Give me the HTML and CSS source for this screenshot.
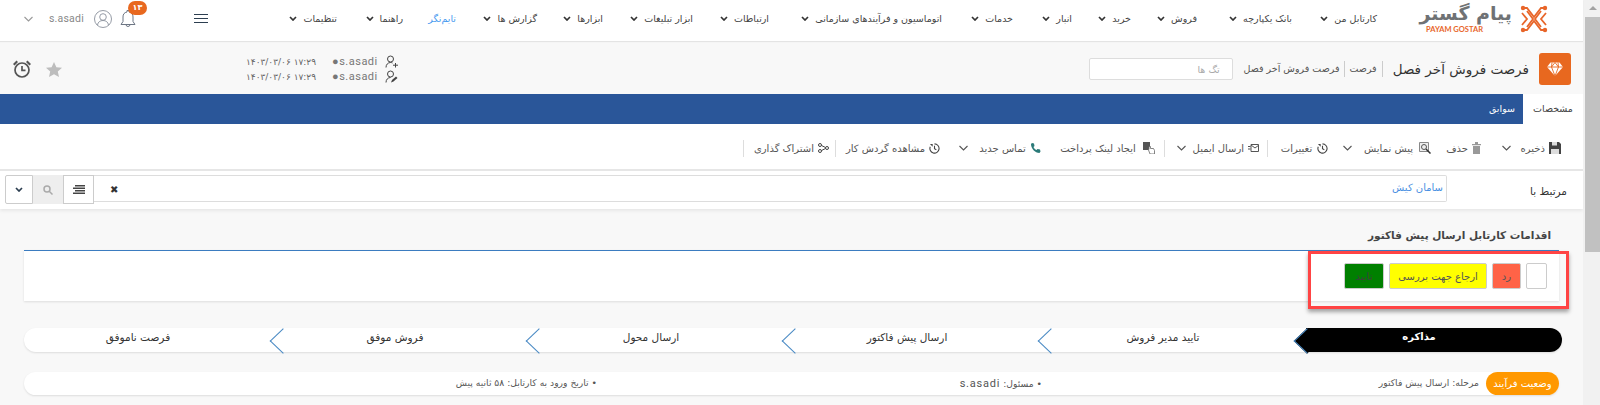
FILE: index.html
```html
<!DOCTYPE html>
<html lang="fa">
<head>
<meta charset="utf-8">
<title>فرصت فروش آخر فصل</title>
<link rel="stylesheet" href="styles.css">
</head>
<body>
<svg class="defs" width="0" height="0" aria-hidden="true">
  <symbol id="chev" viewBox="0 0 8 5"><path d="M1 1l3 3 3-3" fill="none" stroke="currentColor" stroke-width="1.7"/></symbol>
  <symbol id="thin" viewBox="0 0 9 6"><path d="M.5 1l4 4 4-4" fill="none" stroke="currentColor" stroke-width="1.1"/></symbol>
  <symbol id="clock" viewBox="0 0 12 12"><path d="M6 1a5 5 0 1 1-4.600 3M6 3v3.300l2 1" fill="none" stroke="#444" stroke-width="1.200"/><path d="M1 1h3v3z" fill="#444"/></symbol>
</svg>
<div class="page">
  <main class="main">
    <header class="topbar">
      <a class="logo">
        <svg class="logo-mark" viewBox="0 0 30 28"><g fill="none" stroke="#e8662a" stroke-width="1.800"><path d="M4 3h4l7 9 7-9h4"/><path d="M4 25h4l7-9 7 9h4"/><path d="M8 6l6 8-6 8"/><path d="M22 6l-6 8 6 8"/><path d="M3 8l5 6-5 6M27 8l-5 6 5 6"/></g><g fill="#e8662a"><circle cx="4" cy="3" r="2.200"/><circle cx="26" cy="3" r="2.200"/><circle cx="4" cy="25" r="2.200"/><circle cx="26" cy="25" r="2.200"/></g></svg>
        <span class="logo-text"><b class="logo-fa">پیام گستر</b><b class="logo-en">PAYAM GOSTAR</b></span>
      </a>
      <nav class="nav">
        <a class="nav-item"><span>کارتابل من</span><svg class="chev"><use href="#chev"/></svg></a>
        <a class="nav-item"><span>بانک یکپارچه</span><svg class="chev"><use href="#chev"/></svg></a>
        <a class="nav-item"><span>فروش</span><svg class="chev"><use href="#chev"/></svg></a>
        <a class="nav-item"><span>خرید</span><svg class="chev"><use href="#chev"/></svg></a>
        <a class="nav-item"><span>انبار</span><svg class="chev"><use href="#chev"/></svg></a>
        <a class="nav-item"><span>خدمات</span><svg class="chev"><use href="#chev"/></svg></a>
        <a class="nav-item"><span>اتوماسیون و فرآیندهای سازمانی</span><svg class="chev"><use href="#chev"/></svg></a>
        <a class="nav-item"><span>ارتباطات</span><svg class="chev"><use href="#chev"/></svg></a>
        <a class="nav-item"><span>ابزار تبلیغات</span><svg class="chev"><use href="#chev"/></svg></a>
        <a class="nav-item"><span>ابزارها</span><svg class="chev"><use href="#chev"/></svg></a>
        <a class="nav-item"><span>گزارش ها</span><svg class="chev"><use href="#chev"/></svg></a>
        <a class="nav-item nav-link"><span>تایم‌نگر</span></a>
        <a class="nav-item"><span>راهنما</span><svg class="chev"><use href="#chev"/></svg></a>
        <a class="nav-item"><span>تنظیمات</span><svg class="chev"><use href="#chev"/></svg></a>
      </nav>
      <div class="burger"><i></i><i></i><i></i></div>
      <div class="bell">
        <svg viewBox="0 0 16 19" width="16" height="19"><path d="M1 15.500h14l-2-3V8a5 5 0 0 0-4-5V1.500H7V3a5 5 0 0 0-4 5v4.500zM6 15.500a2 2 0 0 0 4 0" fill="none" stroke="#6d7684" stroke-width="1"/></svg>
        <span class="badge">۱۳</span>
      </div>
      <svg class="avatar" viewBox="0 0 18 18" width="18" height="18"><g fill="none" stroke="#8a919c" stroke-width=".9"><circle cx="9" cy="9" r="8.500"/><circle cx="9" cy="7" r="3.300"/><path d="M3.500 15c.5-3 2.500-4.500 5.500-4.500s5 1.500 5.500 4.500"/></g></svg>
      <span class="username">s.asadi</span>
      <svg class="thin user-chev"><use href="#thin"/></svg>
    </header>

    <section class="subhead">
      <div class="gem">
        <svg viewBox="0 0 16 14" width="16" height="14"><path d="M3.500.5h9L16 5l-8 9-8-9z" fill="#fff"/><path d="M0 5h16M5 .5L4.500 5 8 14l3.500-9L11 .5M4.500 5L8 .5 11.500 5" fill="none" stroke="#e8681f" stroke-width=".9"/></svg>
      </div>
      <h1 class="title">فرصت فروش آخر فصل</h1>
      <span class="crumb crumb-first">فرصت</span>
      <span class="crumb">فرصت فروش آخر فصل</span>
      <input class="tags" placeholder="تگ ها">
      <div class="audit">
        <div class="audit-row">
          <svg viewBox="0 0 13 13" width="13" height="13"><g fill="none" stroke="#444" stroke-width="1"><circle cx="5.500" cy="4" r="3"/><path d="M1 12.500c0-3 2-5 4.500-5 1 0 1.500.2 2 .5M10.500 8v4.500M8 10.200h5"/></g></svg>
          <span class="audit-user">●s.asadi</span>
          <span class="audit-date">۱۷:۲۹ ۱۴۰۳/۰۳/۰۶</span>
        </div>
        <div class="audit-row">
          <svg viewBox="0 0 13 13" width="13" height="13"><g fill="none" stroke="#444" stroke-width="1"><circle cx="5.500" cy="4" r="3"/><path d="M1 12.500c0-3 2-5 4.500-5"/></g><path d="M6 12.500l1-2.500 4-3.500 1.500 1.500-4 3.500z" fill="#444"/></svg>
          <span class="audit-user">●s.asadi</span>
          <span class="audit-date">۱۷:۲۹ ۱۴۰۳/۰۳/۰۶</span>
        </div>
      </div>
      <svg class="star" viewBox="0 0 16 15" width="16" height="15"><path d="M8 0l2.400 5.200 5.600.6-4.200 3.700 1.200 5.500L8 12.200 3 15l1.200-5.500L0 5.800l5.600-.6z" fill="#bdbdbd"/></svg>
      <svg class="alarm" viewBox="0 0 18 18" width="18" height="18"><g fill="none" stroke="#555" stroke-width="1.700"><circle cx="9" cy="10" r="7"/><path d="M9 6v4.300h3.500"/></g><path d="M0 4l3.500-3.500L5 2 1.500 5.500zM18 4L14.500.5 13 2l3.500 3.500z" fill="#555"/></svg>
    </section>

    <div class="tabs">
      <a class="tab tab-active">مشخصات</a>
      <a class="tab">سوابق</a>
    </div>

    <div class="toolbar">
      <a class="tool t-save">
        <svg viewBox="0 0 12 12" width="12" height="12"><path d="M0 0h10l2 2v10H0z" fill="#444"/><path d="M3 0h5v3.500H3zM2 7h8v5H2z" fill="#ddd"/></svg>
        <span>ذخیره</span><svg class="thin"><use href="#thin"/></svg>
      </a>
      <a class="tool t-del">
        <svg viewBox="0 0 9 12" width="9" height="12"><path d="M0 2h9v1.200H0zM3 0h3v2H3zM1 4h7v8H1z" fill="#999"/></svg>
        <span>حذف</span>
      </a>
      <a class="tool t-preview">
        <svg viewBox="0 0 12 12" width="12" height="12"><path d="M.5.500h9v9h-9z" fill="#eee" stroke="#888"/><circle cx="5" cy="5" r="2.500" fill="none" stroke="#555"/><path d="M7 7l4.500 4.500" stroke="#333" stroke-width="1.500"/></svg>
        <span>پیش نمایش</span><svg class="thin"><use href="#thin"/></svg>
      </a>
      <a class="tool tool-sep t-changes">
        <svg viewBox="0 0 12 12" width="11" height="11"><use href="#clock"/></svg>
        <span>تغییرات</span>
      </a>
      <a class="tool tool-sep t-mail">
        <svg viewBox="0 0 11 8" width="11" height="8"><path d="M3 .5h7.500v7H3z" fill="#fff" stroke="#555"/><path d="M3 1l4 3 4-3" fill="none" stroke="#555"/><path d="M0 2.500h2.500M0 5h2.500" stroke="#555"/></svg>
        <span>ارسال ایمیل</span><svg class="thin"><use href="#thin"/></svg>
      </a>
      <a class="tool t-link">
        <svg viewBox="0 0 12 12" width="12" height="12"><path d="M0 0h7v8H0z" fill="#555"/><path d="M6 6.500V4.500h1.500v2h3l1 2V12H7L5.500 8z" fill="#fff" stroke="#666" stroke-width=".8"/></svg>
        <span>ایجاد لینک پرداخت</span>
      </a>
      <a class="tool t-call">
        <svg viewBox="0 0 10 10" width="10" height="10"><path d="M1 0l2 .5.500 2.500-1 1c.6 1.300 1.500 2.200 3 3l1-1 2.500.5.500 2-1 1.500C4 10 0 5.500 0 1z" fill="#2b7a78"/></svg>
        <span>تماس جدید</span><svg class="thin"><use href="#thin"/></svg>
      </a>
      <a class="tool tool-sep t-flow">
        <svg viewBox="0 0 12 12" width="11" height="11"><use href="#clock"/></svg>
        <span>مشاهده گردش کار</span>
      </a>
      <a class="tool tool-sep t-share">
        <svg viewBox="0 0 11 10" width="11" height="10"><g fill="none" stroke="#444"><circle cx="2" cy="2" r="1.500"/><circle cx="2" cy="8" r="1.500"/><circle cx="9" cy="5" r="1.500"/><path d="M3.500 2.500l4 2M3.500 7.500l4-2"/></g></svg>
        <span>اشتراک گذاری</span>
      </a>
    </div>

    <div class="related">
      <label class="related-label">مرتبط با</label>
      <div class="related-input">
        <a class="related-value">سامان کیش</a>
        <span class="related-clear">✖</span>
      </div>
      <button class="addon">
        <svg viewBox="0 0 12 9" width="12" height="9"><path d="M2 0h10v1.500H2zM0 2.500h12V4H0zM2 5h10v1.500H2zM0 7.500h12V9H0z" fill="#444"/></svg>
      </button>
      <button class="addon addon-muted">
        <svg viewBox="0 0 10 10" width="10" height="10"><circle cx="4" cy="4" r="3" fill="none" stroke="#aaa" stroke-width="1.500"/><path d="M6 6l3.500 3.500" stroke="#aaa" stroke-width="1.500"/></svg>
      </button>
      <button class="addon addon-end"><svg class="chev addon-chev"><use href="#chev"/></svg></button>
    </div>

    <h2 class="section-title">اقدامات کارتابل ارسال پیش فاکتور</h2>
    <div class="actions">
      <button class="act act-empty"></button>
      <button class="act act-red">رد</button>
      <button class="act act-yellow">ارجاع جهت بررسی</button>
      <button class="act act-green">تایید</button>
      <div class="highlight"></div>
    </div>

    <div class="stepper">
      <div class="step step-current">مذاکره</div>
      <div class="step">تایید مدیر فروش</div>
      <div class="step">ارسال پیش فاکتور</div>
      <div class="step">ارسال محول</div>
      <div class="step">فروش موفق</div>
      <div class="step step-last">فرصت ناموفق</div>
    </div>

    <div class="status">
      <span class="status-badge">وضعیت فرآیند</span>
      <div class="status-grid">
        <span>مرحله: ارسال پیش فاکتور</span>
        <span>• مسئول: <b class="status-user">s.asadi</b></span>
        <span>• تاریخ ورود به کارتابل: ۵۸ ثانیه پیش</span>
      </div>
    </div>
  </main>
  <aside class="scrollbar">
    <span class="scroll-up"></span>
    <span class="scroll-thumb"></span>
  </aside>
</div>
</body>
</html>
```
FILE: styles.css
```css
* { box-sizing: border-box; }
html, body { margin: 0; height: 100%; overflow: hidden; }
body {
  font-family: "DejaVu Sans", sans-serif;
  font-size: 9.5px;
  color: #444;
  background: #f8f8f8;
}
.defs { position: absolute; }
.page { display: flex; height: 405px; overflow: hidden; }
.main { flex: 1; min-width: 0; direction: rtl; }
.scrollbar { width: 17px; background: #f1f1f1; padding-left: 2px; display: flex; flex-direction: column; }
.scroll-up { height: 17px; position: relative; }
.scroll-up::before {
  content: ""; position: absolute; left: 4px; top: 6px;
  border: 4px solid transparent; border-top: 0; border-bottom: 4px solid #a3a3a3;
}
.scroll-thumb { height: 235px; background: #c1c1c1; }

.topbar {
  height: 41px; background: #fff; display: flex; align-items: center;
  box-shadow: 0 1px 1px #e4e4e4; padding: 0 30px 4px 24px; position: relative;
}
.logo { width: 133px; height: 30px; display: flex; align-items: center; gap: 3px; flex: none; }
.logo-mark { width: 38px; height: 28px; flex: none; }
.logo-text { display: flex; flex-direction: column; line-height: 1; width: 92px; }
.logo-fa { font-size: 19px; color: #6f7275; height: 21px; line-height: 18px; white-space: nowrap; }
.logo-en { font: 700 7.500px "Lato", sans-serif; color: #e8662a; direction: ltr; text-align: left; padding-left: 6px; }
.nav {
  display: grid; margin-right: 43px; align-items: center;
  grid-template-columns: 85px 95px 66px 59px 59px 71px 173px 76px 90px 66px 81px 53px 66px 50px;
}
.nav-item { display: flex; align-items: center; gap: 6px; color: #444; white-space: nowrap; }
.nav-link { color: #4a9bf0; }
.chev { width: 8px; height: 5px; color: #333; flex: none; }
.thin { width: 9px; height: 6px; color: #555; flex: none; }
.burger { margin-right: 79px; margin-left: auto; width: 14px; display: flex; flex-direction: column; gap: 3px; flex: none; }
.burger i { display: block; height: 1px; background: #2c3e50; }
.bell { position: relative; width: 16px; height: 19px; flex: none; }
.badge {
  position: absolute; top: -8px; right: -11px; width: 19px; height: 14px; border-radius: 8px;
  background: #e8681f; color: #fff; font-size: 8px; font-weight: 700; text-align: center; line-height: 14px;
}
.avatar { margin-right: 8px; flex: none; }
.username { margin-right: 10px; font: 10.500px "Roboto", sans-serif; letter-spacing: .2px; color: #888; direction: ltr; }
.user-chev { margin-right: 16px; color: #999; }

.subhead { height: 53px; display: flex; align-items: center; padding: 3px 12px 0 0; position: relative; }
.gem {
  width: 32px; height: 32px; background: #e8681f; border-radius: 3px; flex: none;
  display: flex; align-items: center; justify-content: center;
}
.title { font-size: 13.500px; font-weight: 400; color: #333; margin: 0 10px 0 10px; white-space: nowrap; }
.crumb { padding-right: 5px; font-size: 9.500px; color: #555; white-space: nowrap; border-right: 1px solid #ccc; line-height: 16px; margin-left: 4px; }
.tags {
  width: 144px; height: 22px; margin-right: 7px; border: 1px solid #ddd; border-radius: 2px;
  background: #fff; font: 9.500px "DejaVu Sans", sans-serif; padding: 0 12px; direction: rtl;
}
.tags::placeholder { color: #aaa; }
.audit { margin-right: auto; display: flex; flex-direction: column; gap: 1px; }
.audit-row { display: flex; align-items: center; gap: 7px; height: 14px; }
.audit-user { font: 11px "Roboto", sans-serif; letter-spacing: .5px; color: #777; direction: ltr; }
.audit-date { font-size: 9px; color: #666; margin-right: 9px; white-space: nowrap; }
.star { margin-right: 184px; flex: none; }
.alarm { margin: 0 15px 0 13px; flex: none; }

.tabs { height: 30px; background: #2a5699; display: flex; }
.tab { color: #fff; padding: 0 8px; line-height: 30px; }
.tab-active { width: 60px; background: #fff; color: #444; text-align: center; padding: 0; }

.toolbar {
  height: 47px; background: #fff; border-bottom: 2px solid #e6e6e6;
  display: flex; align-items: center; padding: 3px 22px 0 0; color: #555; font-size: 10px;
}
.tool { display: flex; align-items: center; gap: 4px; white-space: nowrap; }
.tool span { display: block; text-align: center; flex: none; }
.tool .thin { margin-right: 6px; }
.tool-sep { border-left: 1px solid #ddd; height: 17px; padding-left: 12px; }
.t-save { margin-left: 21px; }
.t-save span { width: 24px; }
.t-del { margin-left: 16px; }
.t-del span { width: 21px; }
.t-preview { margin-left: 15px; }
.t-preview span { width: 53px; }
.t-changes { margin-left: 8px; }
.t-changes span { width: 33px; }
.t-mail { margin-left: 9px; }
.t-mail span { width: 48px; }
.t-link { margin-left: 16px; }
.t-link span { width: 82px; }
.t-call { margin-left: 19px; }
.t-call span { width: 49px; }
.t-flow { margin-left: 6px; }
.t-flow span { width: 77px; }
.t-share span { width: 58px; }

.related {
  height: 38px; background: #fff; display: flex; align-items: flex-start;
  padding: 4px 16px 0 5px; box-shadow: 0 2px 3px #e8e8e8; position: relative;
}
.related-label { width: 120px; flex: none; color: #333; font-size: 10.500px; line-height: 32px; }
.related-input {
  flex: 1; height: 27px; border: 1px solid #ddd; border-left: 0; border-radius: 0 2px 2px 0;
  display: flex; justify-content: space-between; align-items: flex-start; padding: 6px 3px 0 16px;
}
.related-value { color: #4a90e2; font-size: 10px; }
.related-clear { font-size: 10px; color: #333; margin-top: 2px; }
.addon {
  width: 31px; height: 29px; border: 1px solid #ccc; background: #fff; padding: 0;
  display: flex; align-items: center; justify-content: center; flex: none;
}
.addon-muted { background: #eee; border: 0; width: 30px; }
.addon-end { width: 28px; border-radius: 2px 0 0 2px; }
.addon-chev { color: #2c3e50; }

.section-title { font-size: 10.500px; font-weight: 700; color: #444; margin: 18px 32px 7px 0; line-height: 16px; }
.actions {
  margin: 0 24px; height: 51px; background: #fff; border-top: 1px solid #3b7cc0;
  display: flex; gap: 5px; padding: 12px 12px 0 0; box-shadow: 0 1px 2px #ddd; position: relative;
}
.act { height: 26px; border: 1px solid #ccc; border-radius: 2px; padding: 0; font: 10px "DejaVu Sans", sans-serif; color: #555; white-space: nowrap; }
.act-empty { width: 21px; background: #fff; }
.act-red { width: 29px; background: #ff6347; }
.act-yellow { width: 98px; background: #ff0; }
.act-green { width: 40px; background: #008000; color: #3f3f3f; }
.highlight {
  position: absolute; top: 0; right: -10px; width: 261px; height: 58px;
  border: 3px solid #ff4444; box-shadow: 0 3px 4px rgba(0,0,0,.35);
  pointer-events: none;
}

.stepper {
  margin: 27px 21px 0 24px; height: 24px; background: #fff; border-radius: 12px;
  display: flex; box-shadow: 0 1px 2px #ddd; position: relative;
}
.step {
  width: 256px; flex: none; text-align: center; color: #333; line-height: 18px; position: relative;
  font-size: 10.500px; padding-right: 30px;
}
.step::after {
  content: ""; position: absolute; left: -8.500px; top: 3.500px; width: 17px; height: 17px;
  border-left: 1px solid #4a8ac4; border-bottom: 1px solid #4a8ac4;
  transform: scale(1.050, 1) rotate(45deg);
}
.step-current { background: #000; color: #fff; font-weight: 700; border-radius: 0 12px 12px 0; font-size: 10px; }
.step-current::after { background: #000; }
.step-last { flex: 1; width: auto; }
.step-last::after { display: none; }

.status {
  margin: 20px 24px 0; height: 23px; background: #fff; border-radius: 12px;
  display: flex; align-items: center; box-shadow: 0 1px 2px #ddd;
}
.status-badge {
  width: 73px; height: 23px; background: #ff9800; color: #fff; border-radius: 12px; flex: none;
  text-align: center; line-height: 23px; font-size: 10px;
}
.status-grid { display: grid; grid-template-columns: 437px 445px 1fr; flex: 1; padding-right: 7px; font-size: 9.200px; color: #555; }
.status-user { font: 11px "Roboto", sans-serif; letter-spacing: .8px; }
```
